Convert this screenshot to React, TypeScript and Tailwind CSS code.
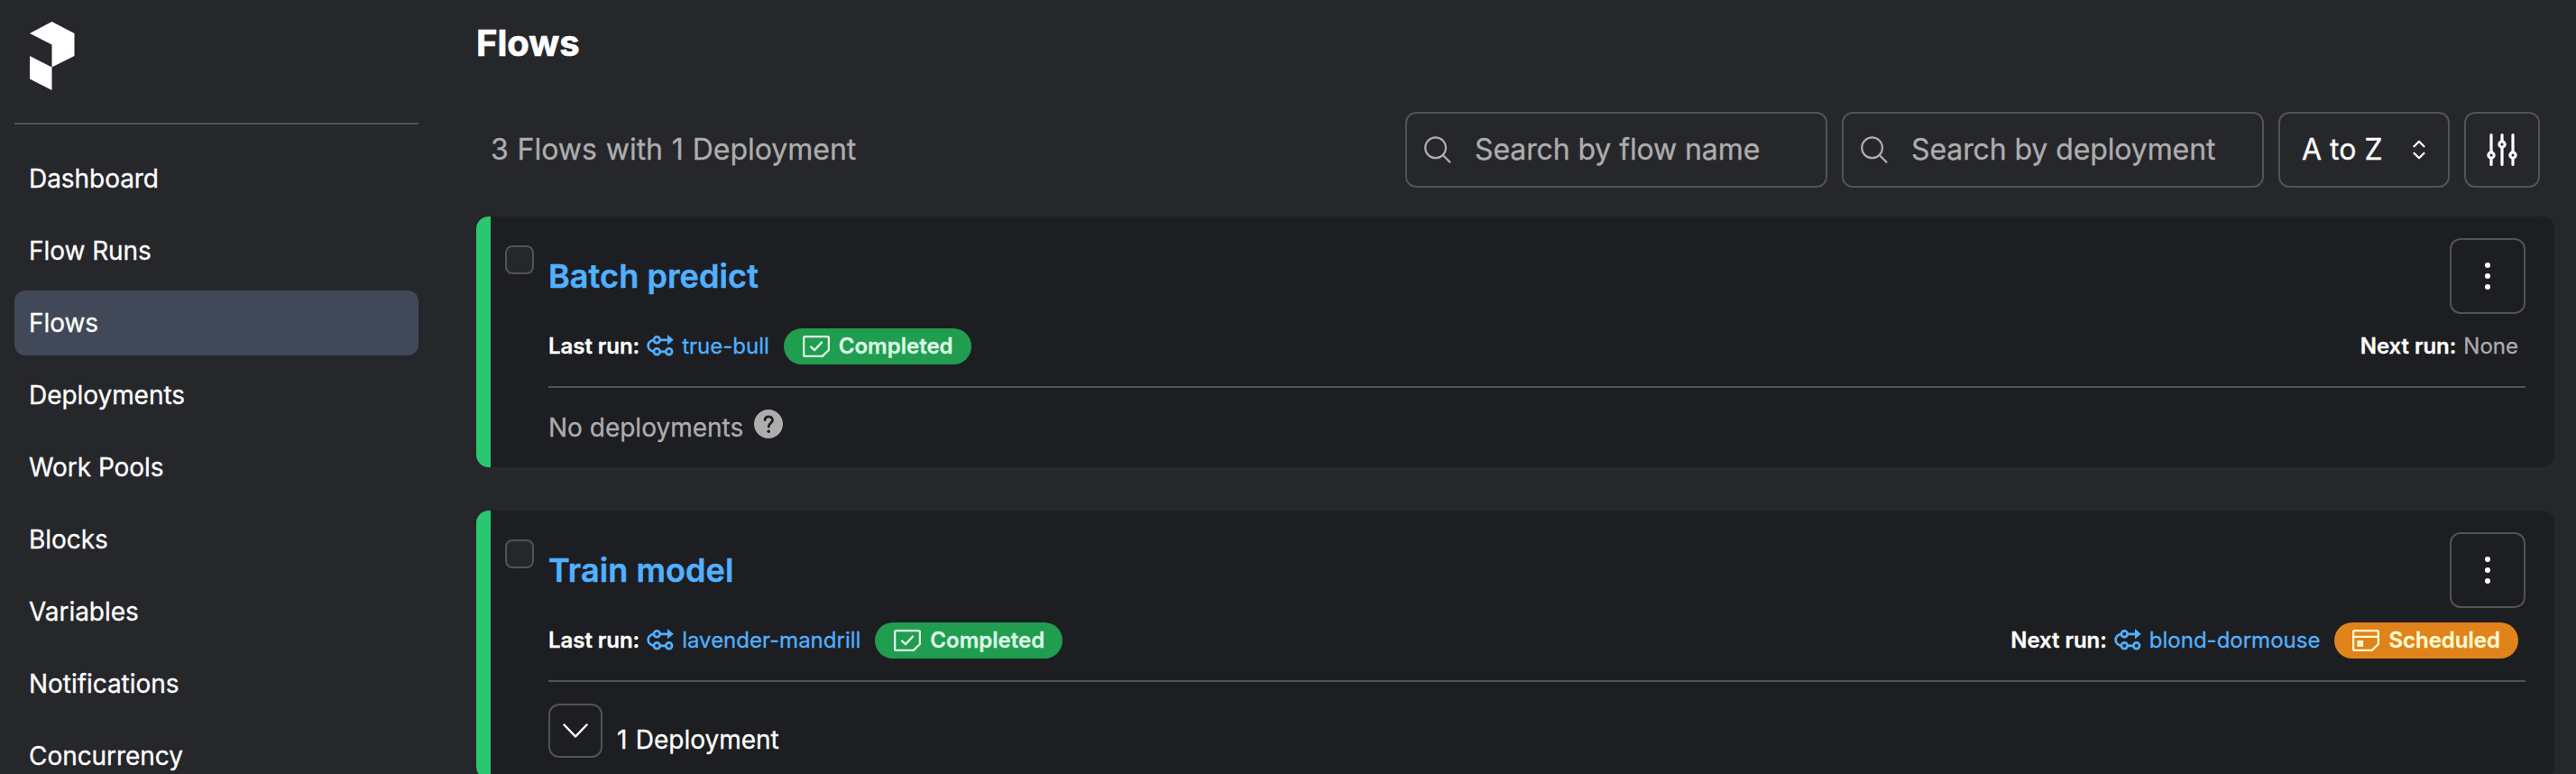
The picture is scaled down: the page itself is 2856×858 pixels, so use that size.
import { ReactNode } from "react";

const NAV = ["Dashboard", "Flow Runs", "Flows", "Deployments", "Work Pools", "Blocks", "Variables", "Notifications", "Concurrency"];

function Logo() {
  return (
    <svg viewBox="0 0 50 76" className="h-[76px] w-[50px]" fill="#fff">
      <path d="M24.5 0 L49.5 13 V38 L24.5 50.5 V25.5 L0 13 Z" />
      <path d="M0 38 L24.5 50.5 V76 L0 63.5 Z" />
    </svg>
  );
}

function SearchIcon() {
  return (
    <svg viewBox="0 0 30 30" className="size-[30px] shrink-0" fill="none" stroke="#adadad" strokeWidth="2.2" strokeLinecap="round">
      <circle cx="12.6" cy="12.8" r="11.4" />
      <path d="M20.8 21 L28.4 28.6" />
    </svg>
  );
}

function FlowRunIcon() {
  return (
    <svg viewBox="0 0 30 26" className="h-[26px] w-[30px] shrink-0" fill="none" stroke="currentColor" strokeWidth="2.7">
      <circle cx="11.3" cy="5.8" r="3.4" />
      <circle cx="11.3" cy="18.8" r="3.4" />
      <circle cx="24.7" cy="18.8" r="3.4" />
      <path d="M14.7 5.8 H24 M14.7 18.8 H21.3 M8 5.8 C-0.5 7 -0.5 17.6 8 18.8" />
      <path d="M23 0 L29.7 5.8 L23 11.4 Z" fill="currentColor" stroke="none" />
    </svg>
  );
}

function CompletedIcon() {
  return (
    <svg viewBox="0 0 30 24" className="h-6 w-[30px] shrink-0" fill="none" stroke="currentColor" strokeWidth="2.3" strokeLinejoin="round">
      <path d="M2.5 1.15 H27.5 Q28.85 1.15 28.85 2.5 V16 L21.8 22.85 H2.5 Q1.15 22.85 1.15 21.5 V2.5 Q1.15 1.15 2.5 1.15 Z" />
      <path d="M8.4 11.8 L13 16.2 L21.6 6.9" />
    </svg>
  );
}

function ScheduledIcon() {
  return (
    <svg viewBox="0 0 30 24" className="h-6 w-[30px] shrink-0" fill="none" stroke="currentColor" strokeWidth="2.3" strokeLinejoin="round">
      <path d="M2.5 1.15 H27.5 Q28.85 1.15 28.85 2.5 V16 L21.8 22.85 H2.5 Q1.15 22.85 1.15 21.5 V2.5 Q1.15 1.15 2.5 1.15 Z" />
      <path d="M1.25 7.9 H28.75" />
      <rect x="5.3" y="12" width="6.9" height="6.9" fill="currentColor" stroke="none" />
    </svg>
  );
}

function SearchBox({ text }: { text: string }) {
  return (
    <div className="flex h-[84px] w-[468px] items-center rounded-[12px] border-2 border-[#52525b] pl-[19px] text-[32px] tracking-[-0.1px] text-[#adadad]">
      <SearchIcon />
      <span className="ml-[26px] whitespace-nowrap">{text}</span>
    </div>
  );
}

function RunLink({ label, name, badge }: { label: string; name?: string; badge?: ReactNode }) {
  return (
    <div className="flex h-10 items-center">
      <span className="font-semibold tracking-[-0.05px] text-white">{label}</span>
      {name ? (
        <span className="ml-2 flex items-center text-[#51b0ff]">
          <FlowRunIcon />
          <span className="ml-[9px]">{name}</span>
        </span>
      ) : (
        <span className="ml-2 text-[#adadad]">None</span>
      )}
      {badge}
    </div>
  );
}

function Badge({ kind }: { kind: "Completed" | "Scheduled" }) {
  const done = kind === "Completed";
  return (
    <span className={"ml-4 flex h-10 items-center gap-2.5 rounded-full pr-5 font-semibold " + (done ? "bg-[#219d4f] pl-[21px] text-[#dcf9e6]" : "bg-[#e0831a] pl-5 text-[#fffad1]")}>
      {done ? <CompletedIcon /> : <ScheduledIcon />}
      {kind}
    </span>
  );
}

function FlowCard({ title, last, next, children }: { title: string; last: ReactNode; next: ReactNode; children: ReactNode }) {
  return (
    <section className="flex w-[2304px] shrink-0 overflow-hidden rounded-[14px] border-l-[16px] border-[#2ac770] bg-[#1d1e22] pr-8 pb-6 pl-4">
      <div className="mt-8 size-8 shrink-0 rounded-[8px] border-2 border-[#52525b] bg-[#26272b]" />
      <div className="ml-4 flex grow flex-col">
        <div className="mt-6 flex h-[84px] items-center justify-between">
          <h2 className="text-[36px] font-semibold tracking-[0.1px] text-[#51b0ff] [-webkit-text-stroke:0.5px]">{title}</h2>
          <div className="flex size-[84px] items-center justify-center rounded-[12px] border-2 border-[#52525b]">
            <svg viewBox="0 0 6 30" className="h-[30px] w-[6px]" fill="#fff">
              <circle cx="3" cy="3" r="3" />
              <circle cx="3" cy="15" r="3" />
              <circle cx="3" cy="27" r="3" />
            </svg>
          </div>
        </div>
        <div className="mt-4 flex justify-between pr-2 text-[24px]">
          {last}
          {next}
        </div>
        <div className="mt-6 h-0.5 bg-[#52525b]" />
        {children}
      </div>
    </section>
  );
}

export default function App() {
  return (
    <div className="flex h-[858px] w-[2856px] overflow-hidden bg-[#26272b] font-['Inter',sans-serif] text-white [-webkit-text-stroke:0.3px] [font-optical-sizing:none]">
      <aside className="w-[480px] shrink-0 px-4 pt-6">
        <div className="pl-[17px]">
          <Logo />
        </div>
        <div className="mt-9 h-0.5 bg-[#52525b]" />
        <nav className="mt-6 flex flex-col gap-2">
          {NAV.map((n) => (
            <a key={n} className={"flex h-[72px] shrink-0 items-center rounded-[12px] pl-4 text-[28px] tracking-[-0.05px] " + (n === "Flows" ? "bg-[#414958]" : "")}>
              {n}
            </a>
          ))}
        </nav>
      </aside>
      <main className="flex flex-col pl-12">
        <h1 className="mt-6 h-12 text-[40px] leading-[48px] font-bold [-webkit-text-stroke:0.7px]">Flows</h1>
        <div className="mt-[52px] flex w-[2288px] items-center pl-4">
          <span className="grow text-[32px] text-[#adadad] [word-spacing:0.8px]">3 Flows with 1 Deployment</span>
          <div className="flex gap-4">
            <SearchBox text="Search by flow name" />
            <SearchBox text="Search by deployment" />
            <div className="flex h-[84px] w-[190px] items-center justify-between rounded-[12px] border-2 border-[#52525b] pr-[25px] pl-6 text-[32px]">
              A to Z
              <svg viewBox="0 0 14 26" className="h-[26px] w-[14px]" fill="none" stroke="#fff" strokeWidth="2.2" strokeLinecap="round" strokeLinejoin="round">
                <path d="M1.5 9.3 L7 3.8 L12.5 9.3 M1.5 16.8 L7 22.3 L12.5 16.8" />
              </svg>
            </div>
            <div className="flex size-[84px] items-center justify-center rounded-[12px] border-2 border-[#52525b]">
              <svg viewBox="0 0 36 36" className="size-9" fill="none" stroke="#fff" strokeWidth="3.2" strokeLinecap="round">
                <path d="M6 1.6 V20.5 M6 27.5 V34.4 M18 1.6 V8.5 M18 15.5 V34.4 M30 1.6 V20.5 M30 27.5 V34.4" />
                <circle cx="6" cy="24" r="3.1" />
                <circle cx="18" cy="12" r="3.1" />
                <circle cx="30" cy="24" r="3.1" />
              </svg>
            </div>
          </div>
        </div>
        <div className="mt-8 flex flex-col gap-12">
          <FlowCard title="Batch predict" last={<RunLink label="Last run:" name="true-bull" badge={<Badge kind="Completed" />} />} next={<RunLink label="Next run:" />}>
            <div className="mt-6 flex h-10 items-center text-[28px] text-[#adadad]">
              <span>No deployments</span>
              <svg viewBox="0 0 32 32" className="ml-3 size-8 self-start" fill="none">
                <circle cx="16" cy="16" r="16" fill="#adadad" />
                <path d="M12 11.5 C12.5 6.5 20.5 6.7 20.5 11.8 C20.5 15 16.2 15.2 16.2 19" stroke="#1d1e22" strokeWidth="2.8" strokeLinecap="round" />
                <circle cx="16.2" cy="24.3" r="1.8" fill="#1d1e22" />
              </svg>
            </div>
          </FlowCard>
          <FlowCard
            title="Train model"
            last={<RunLink label="Last run:" name="lavender-mandrill" badge={<Badge kind="Completed" />} />}
            next={<RunLink label="Next run:" name="blond-dormouse" badge={<Badge kind="Scheduled" />} />}
          >
            <div className="mt-6 flex h-[60px] items-center text-[28px]">
              <div className="flex size-[60px] items-center justify-center rounded-[12px] border-2 border-[#52525b]">
                <svg viewBox="0 0 28 16" className="h-4 w-7" fill="none" stroke="#fff" strokeWidth="2.5" strokeLinecap="round" strokeLinejoin="round">
                  <path d="M1.5 1.5 L14 14.5 L26.5 1.5" />
                </svg>
              </div>
              <span className="mt-5 ml-4 [word-spacing:1.5px]">1 Deployment</span>
            </div>
          </FlowCard>
        </div>
      </main>
    </div>
  );
}
